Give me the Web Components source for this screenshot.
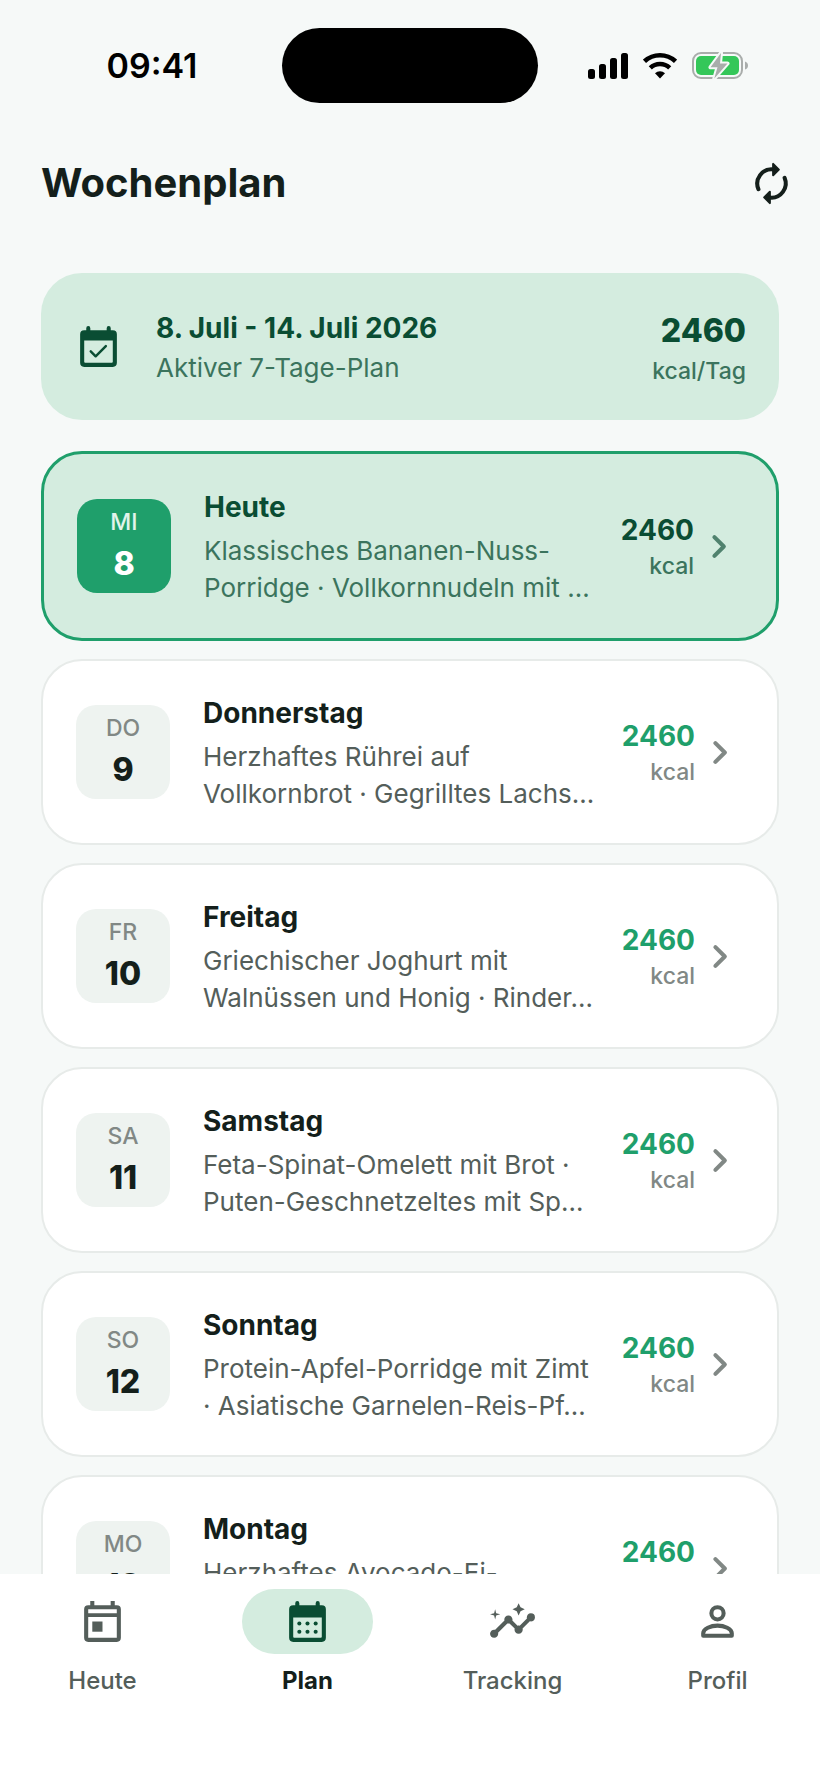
<!DOCTYPE html>
<html lang="de">
<head>
  <meta charset="utf-8">
  <meta name="viewport" content="width=device-width, initial-scale=1">
  <title>Wochenplan</title>
  <style>
    body {
      --surface: #f6f9f8;
      --card: #ffffff;
      --ink: #141f1b;
      --ink-soft: #545e5a;
      --ink-muted: #818885;
      --primary: #1f9f6b;
      --tint: #d4ecdf;
      --on-tint: #0a4d33;
      --on-tint-soft: #3b745d;
      --outline: #e7ebe9;
      --tile: #eef3f0;
      margin: 0;
      background: var(--surface);
      color: var(--ink);
      font-family: Inter, "Liberation Sans", sans-serif;
    }
  </style>
</head>
<body>
  <plan-app>
    <status-bar slot="top" time="09:41"></status-bar>
    <page-header slot="top">Wochenplan</page-header>

    <plan-summary kcal="2460">
      8. Juli - 14. Juli 2026
      <span slot="note">Aktiver 7-Tage-Plan</span>
    </plan-summary>
    <day-list>
      <day-card today weekday="MI" day="8" kcal="2460">
        Heute
        <span slot="meals">Klassisches Bananen-Nuss-Porridge · Vollkornnudeln mit …</span>
      </day-card>
      <day-card weekday="DO" day="9" kcal="2460">
        Donnerstag
        <span slot="meals">Herzhaftes Rührei auf Vollkornbrot · Gegrilltes Lachs…</span>
      </day-card>
      <day-card weekday="FR" day="10" kcal="2460">
        Freitag
        <span slot="meals">Griechischer Joghurt mit Walnüssen und Honig · Rinder…</span>
      </day-card>
      <day-card weekday="SA" day="11" kcal="2460">
        Samstag
        <span slot="meals">Feta-Spinat-Omelett mit Brot · Puten-Geschnetzeltes mit Sp…</span>
      </day-card>
      <day-card weekday="SO" day="12" kcal="2460">
        Sonntag
        <span slot="meals">Protein-Apfel-Porridge mit Zimt · Asiatische Garnelen-Reis-Pf…</span>
      </day-card>
      <day-card weekday="MO" day="13" kcal="2460">
        Montag
        <span slot="meals">Herzhaftes Avocado-Ei-</span>
      </day-card>
    </day-list>

    <nav-bar slot="bottom">
      <nav-item icon="today" href="#heute">Heute</nav-item>
      <nav-item icon="month" href="#plan" active>Plan</nav-item>
      <nav-item icon="insights" href="#tracking">Tracking</nav-item>
      <nav-item icon="person" href="#profil">Profil</nav-item>
    </nav-bar>
  </plan-app>

  <script>
    const ICONS = {
      renew: `
        <g fill="none" stroke="currentColor" stroke-width="2" stroke-linecap="round">
          <path d="M5.6 14.8A7 7 0 0 1 12.8 5.1"/>
          <path d="M18.4 9.2A7 7 0 0 1 11.2 18.9"/>
        </g>
        <g stroke="currentColor" stroke-width="1" stroke-linejoin="round">
          <path d="M12.8 2.4v5.6l2.8-2.8z"/>
          <path d="M11.2 21.6v-5.6l-2.8 2.8z"/>
        </g>`,
      available: `
        <path fill-rule="evenodd" d="M7 2a1 1 0 0 1 1 1v1h8V3a1 1 0 0 1 2 0v1h1a2 2 0 0 1 2 2v14a2 2 0 0 1-2 2H5a2 2 0 0 1-2-2V6a2 2 0 0 1 2-2h1V3a1 1 0 0 1 1-1zM5 9v10.5a.5.5 0 0 0 .5.5h13a.5.5 0 0 0 .5-.5V9z"/>
        <path fill="none" stroke="currentColor" stroke-width="1.2" stroke-linecap="round" stroke-linejoin="round" d="M8.2 14.4l2.4 2.4 5-5"/>`,
      today: `
        <path fill-rule="evenodd" d="M6 2h2v2h8V2h2v2h1a2 2 0 0 1 2 2v14a2 2 0 0 1-2 2H5a2 2 0 0 1-2-2V6a2 2 0 0 1 2-2h1zM5 6v2h14V6zM5 9.8V20h14V9.8z"/>
        <path d="M7 12h5v5H7z"/>`,
      month: `
        <path fill-rule="evenodd" d="M7 2a1 1 0 0 1 1 1v1h8V3a1 1 0 0 1 2 0v1h1a2 2 0 0 1 2 2v14a2 2 0 0 1-2 2H5a2 2 0 0 1-2-2V6a2 2 0 0 1 2-2h1V3a1 1 0 0 1 1-1zM5 10v9.5a.5.5 0 0 0 .5.5h13a.5.5 0 0 0 .5-.5V10z"/>
        <circle cx="8" cy="13" r="1"/><circle cx="12" cy="13" r="1"/><circle cx="16" cy="13" r="1"/>
        <circle cx="8" cy="17" r="1"/><circle cx="12" cy="17" r="1"/><circle cx="16" cy="17" r="1"/>`,
      insights: `
        <path d="M21 8c-1.45 0-2.26 1.44-1.93 2.51l-3.55 3.56c-.3-.09-.74-.09-1.04 0l-2.55-2.55C12.27 10.45 11.46 9 10 9c-1.45 0-2.27 1.44-1.93 2.52l-4.56 4.55C2.44 15.74 1 16.55 1 18c0 1.1.9 2 2 2 1.45 0 2.26-1.44 1.93-2.51l4.55-4.56c.3.09.74.09 1.04 0l2.55 2.55C12.73 16.56 13.54 18 15 18c1.45 0 2.27-1.44 1.93-2.52l3.56-3.55C21.56 12.26 23 11.45 23 10a2 2 0 0 0-2-2z"/>
        <path d="M15 9l.94-2.07L18 6l-2.06-.93L15 3l-.92 2.07L12 6l2.08.93z"/>
        <path d="M3.5 11L4 9l2-.5L4 8l-.5-2L3 8l-2 .5L3 9z"/>`,
      person: `
        <g fill="none" stroke="currentColor" stroke-width="2" stroke-linejoin="round">
          <circle cx="12" cy="8" r="3"/>
          <path d="M5 19v-1.3C5 15.6 8.7 14 12 14s7 1.6 7 3.7V19z"/>
        </g>`,
      chevron: `
        <path fill="none" stroke="currentColor" stroke-width="2" stroke-linecap="round" stroke-linejoin="round" d="M10 7.4l4.6 4.6-4.6 4.6"/>`
    };

    class AppIcon extends HTMLElement {
      constructor() {
        super();
        const shadow = this.attachShadow({ mode: 'open' });
        shadow.innerHTML = `
          <style>
            :host {
              display: block;
              flex: none;
              width: 49px;
              height: 49px;
            }

            svg {
              display: block;
              width: 100%;
              height: 100%;
              fill: currentColor;
            }
          </style>
          <svg viewBox="0 0 24 24" aria-hidden="true">${ICONS[this.getAttribute('name')] || ''}</svg>
        `;
      }
    }

    class PlanApp extends HTMLElement {
      constructor() {
        super();
        const shadow = this.attachShadow({ mode: 'open' });
        shadow.innerHTML = `
          <style>
            :host {
              display: flex;
              flex-direction: column;
              height: 100vh;
            }

            main {
              flex: 1;
              min-height: 0;
              overflow: hidden;
              display: flex;
              flex-direction: column;
              gap: 31px;
              padding: 33px 41px 0;
            }
          </style>
          <slot name="top"></slot>
          <main><slot></slot></main>
          <slot name="bottom"></slot>
        `;
      }
    }

    class StatusBar extends HTMLElement {
      constructor() {
        super();
        const shadow = this.attachShadow({ mode: 'open' });
        shadow.innerHTML = `
          <style>
            :host {
              display: grid;
              grid-template-columns: 1fr 256px 1fr;
              align-items: center;
              justify-items: center;
              padding: 28px 22px 0;
              color: #000;
            }

            time {
              font-size: 34px;
              font-weight: 600;
              line-height: 40px;
            }

            .island {
              width: 100%;
              height: 75px;
              border-radius: 38px;
              background: #000;
            }

            .signals {
              display: flex;
              align-items: center;
              gap: 15px;
            }

            svg {
              display: block;
            }
          </style>
          <time>${this.getAttribute('time')}</time>
          <div class="island"></div>
          <div class="signals">
            <svg width="40" height="27" viewBox="0 0 40 27" aria-hidden="true">
              <rect x="0" y="17" width="7" height="10" rx="2.5"/>
              <rect x="11" y="12" width="7" height="15" rx="2.5"/>
              <rect x="22" y="6" width="7" height="21" rx="2.5"/>
              <rect x="33" y="1" width="7" height="26" rx="2.5"/>
            </svg>
            <svg width="34" height="27" viewBox="0 0 34 27" aria-hidden="true">
              <g fill="none" stroke="#000" stroke-width="4.5">
                <path d="M1.5 9.3a22.8 22.8 0 0 1 31 0"/>
                <path d="M7.3 15.9a14 14 0 0 1 19.4 0"/>
              </g>
              <path d="M17 26.5l-5-5.2a7.3 7.3 0 0 1 10 0z"/>
            </svg>
            <svg width="56" height="27" viewBox="0 0 56 27" aria-hidden="true">
              <rect x="1" y="1" width="49" height="25" rx="8" fill="none" stroke="#a9adab" stroke-width="2"/>
              <path d="M53 9.5q3 1 3 4t-3 4z" fill="#a9adab"/>
              <rect x="4" y="4" width="43" height="19" rx="5" fill="#34c759"/>
              <path d="M29 1L18.5 15.3h7L22.3 26.5l13.2-15H28z" fill="#a9adab" stroke="#f6f9f8" stroke-width="4" stroke-linejoin="round" paint-order="stroke"/>
            </svg>
          </div>
        `;
      }
    }

    class PageHeader extends HTMLElement {
      constructor() {
        super();
        const shadow = this.attachShadow({ mode: 'open' });
        shadow.innerHTML = `
          <style>
            :host {
              display: flex;
              align-items: center;
              justify-content: space-between;
              height: 114px;
              margin-top: 23px;
              padding: 0 24px 0 41px;
            }

            h1 {
              margin: 0;
              font-size: 40px;
              font-weight: 700;
              line-height: 50px;
            }

            button {
              padding: 0;
              border: 0;
              background: none;
              color: inherit;
              cursor: pointer;
            }
          </style>
          <h1><slot></slot></h1>
          <button type="button" aria-label="Aktualisieren"><app-icon name="renew"></app-icon></button>
        `;
      }
    }

    class PlanSummary extends HTMLElement {
      constructor() {
        super();
        const shadow = this.attachShadow({ mode: 'open' });
        shadow.innerHTML = `
          <style>
            :host {
              display: flex;
              align-items: center;
              gap: 33px;
              padding: 33px;
              border-radius: 41px;
              background: var(--tint);
              color: var(--on-tint);
            }

            .text {
              flex: 1;
              min-width: 0;
            }

            h2 {
              margin: 0;
              font-size: 28px;
              font-weight: 700;
              line-height: 42px;
            }

            p {
              margin: 0;
              color: var(--on-tint-soft);
              font-size: 26px;
              line-height: 37px;
            }

            .total {
              display: grid;
              text-align: right;
            }

            .value {
              font-size: 32px;
              font-weight: 800;
              line-height: 49px;
            }

            .unit {
              color: var(--on-tint-soft);
              font-size: 23px;
              font-weight: 500;
              line-height: 32px;
            }
          </style>
          <app-icon name="available"></app-icon>
          <div class="text">
            <h2><slot></slot></h2>
            <p><slot name="note"></slot></p>
          </div>
          <div class="total">
            <span class="value">${this.getAttribute('kcal')}</span>
            <span class="unit">kcal/Tag</span>
          </div>
        `;
      }
    }

    class DayList extends HTMLElement {
      constructor() {
        super();
        const shadow = this.attachShadow({ mode: 'open' });
        shadow.innerHTML = `
          <style>
            :host {
              display: flex;
              flex-direction: column;
              gap: 18px;
            }
          </style>
          <slot></slot>
        `;
      }
    }

    class DayCard extends HTMLElement {
      constructor() {
        super();
        const shadow = this.attachShadow({ mode: 'open' });
        shadow.innerHTML = `
          <style>
            :host {
              display: block;
            }

            a {
              display: flex;
              align-items: center;
              padding: 31px 33px;
              border: 2px solid var(--outline);
              border-radius: 41px;
              background: var(--card);
              color: var(--ink);
              text-decoration: none;
            }

            .tile {
              display: flex;
              flex: none;
              flex-direction: column;
              align-items: center;
              justify-content: center;
              gap: 8px;
              width: 94px;
              height: 94px;
              margin-right: 33px;
              border-radius: 20px;
              background: var(--tile);
            }

            .weekday {
              color: var(--ink-muted);
              font-size: 23px;
              font-weight: 500;
              line-height: 28px;
            }

            .day {
              font-size: 32px;
              font-weight: 800;
              line-height: 40px;
            }

            .text {
              flex: 1;
              min-width: 0;
            }

            h3 {
              margin: 0 0 4px;
              font-size: 28px;
              font-weight: 700;
              line-height: 42px;
            }

            p {
              height: 74px;
              margin: 0;
              color: var(--ink-soft);
              font-size: 26px;
              line-height: 37px;
            }

            .energy {
              display: grid;
              margin-left: 24px;
              text-align: right;
            }

            .value {
              color: var(--primary);
              font-size: 28px;
              font-weight: 700;
              line-height: 40px;
            }

            .unit {
              color: var(--ink-muted);
              font-size: 23px;
              font-weight: 500;
              line-height: 32px;
            }

            app-icon {
              color: var(--ink-muted);
            }

            :host([today]) a {
              padding: 32px 33px;
              border: 3px solid var(--primary);
              background: var(--tint);
            }

            :host([today]) .tile {
              background: var(--primary);
              color: #fff;
            }

            :host([today]) .weekday {
              color: #e2f4eb;
            }

            :host([today]) h3,
            :host([today]) .value {
              color: var(--on-tint);
            }

            :host([today]) p,
            :host([today]) .unit {
              color: var(--on-tint-soft);
            }

            :host([today]) app-icon {
              color: #50826e;
            }
          </style>
          <a href="#tag-${this.getAttribute('day')}">
            <div class="tile">
              <span class="weekday">${this.getAttribute('weekday')}</span>
              <span class="day">${this.getAttribute('day')}</span>
            </div>
            <div class="text">
              <h3><slot></slot></h3>
              <p><slot name="meals"></slot></p>
            </div>
            <div class="energy">
              <span class="value">${this.getAttribute('kcal')}</span>
              <span class="unit">kcal</span>
            </div>
            <app-icon name="chevron"></app-icon>
          </a>
        `;
      }
    }

    class NavBar extends HTMLElement {
      constructor() {
        super();
        const shadow = this.attachShadow({ mode: 'open' });
        shadow.innerHTML = `
          <style>
            :host {
              display: block;
              background: var(--card);
            }

            nav {
              display: grid;
              grid-template-columns: repeat(4, 1fr);
              padding: 15px 0 84px;
            }
          </style>
          <nav><slot></slot></nav>
        `;
      }
    }

    class NavItem extends HTMLElement {
      constructor() {
        super();
        const shadow = this.attachShadow({ mode: 'open' });
        shadow.innerHTML = `
          <style>
            :host {
              display: block;
            }

            a {
              display: flex;
              flex-direction: column;
              align-items: center;
              gap: 10px;
              color: var(--ink-soft);
              font-size: 24px;
              font-weight: 500;
              line-height: 34px;
              text-decoration: none;
            }

            .pill {
              display: grid;
              place-items: center;
              width: 131px;
              height: 65px;
              border-radius: 33px;
            }

            :host([active]) a {
              color: var(--ink);
              font-weight: 700;
            }

            :host([active]) .pill {
              background: var(--tint);
              color: var(--on-tint);
            }
          </style>
          <a href="${this.getAttribute('href')}">
            <span class="pill"><app-icon name="${this.getAttribute('icon')}"></app-icon></span>
            <span><slot></slot></span>
          </a>
        `;
      }
    }

    customElements.define('app-icon', AppIcon);
    customElements.define('plan-app', PlanApp);
    customElements.define('status-bar', StatusBar);
    customElements.define('page-header', PageHeader);
    customElements.define('plan-summary', PlanSummary);
    customElements.define('day-list', DayList);
    customElements.define('day-card', DayCard);
    customElements.define('nav-bar', NavBar);
    customElements.define('nav-item', NavItem);
  </script>
</body>
</html>
